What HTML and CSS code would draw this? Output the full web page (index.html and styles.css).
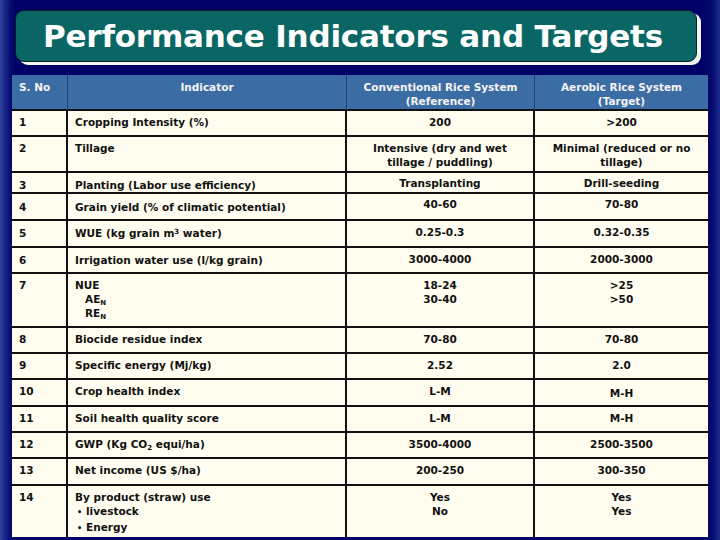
FILE: index.html
```html
<!DOCTYPE html>
<html>
<head>
<meta charset="utf-8">
<link rel="stylesheet" href="styles.css">
</head>
<body>
<div class="slide">
  <div class="title-box"><h1 class="title">Performance Indicators and Targets</h1></div>
  <table class="grid">
    <colgroup>
      <col class="c1"><col class="c2"><col class="c3"><col class="c4">
    </colgroup>
    <thead>
      <tr class="h36">
        <th class="sno">S. No</th>
        <th>Indicator</th>
        <th>Conventional Rice System<br>(Reference)</th>
        <th class="last">Aerobic Rice System<br>(Target)</th>
      </tr>
    </thead>
    <tbody>
      <tr class="h26"><td>1</td><td class="ind">Cropping Intensity (%)</td><td class="v">200</td><td class="v last">&gt;200</td></tr>
      <tr class="h36"><td>2</td><td class="ind">Tillage</td><td class="v">Intensive (dry and wet<br>tillage / puddling)</td><td class="v last">Minimal (reduced or no<br>tillage)</td></tr>
      <tr class="h21"><td class="p5">3</td><td class="ind p5">Planting (Labor use efficiency)</td><td class="v p3">Transplanting</td><td class="v last p3">Drill-seeding</td></tr>
      <tr class="h27"><td class="p6">4</td><td class="ind p6">Grain yield (% of climatic potential)</td><td class="v p3">40-60</td><td class="v last p3">70-80</td></tr>
      <tr class="h27"><td class="p5">5</td><td class="ind p5">WUE (kg grain m<sup>3</sup> water)</td><td class="v p4">0.25-0.3</td><td class="v last p4">0.32-0.35</td></tr>
      <tr class="h26"><td class="p5">6</td><td class="ind p5">Irrigation water use (l/kg grain)</td><td class="v">3000-4000</td><td class="v last">2000-3000</td></tr>
      <tr class="h54"><td>7</td><td class="ind">NUE<br><span class="indent">AE<sub>N</sub></span><br><span class="indent">RE<sub>N</sub></span></td><td class="v">18-24<br>30-40</td><td class="v last">&gt;25<br>&gt;50</td></tr>
      <tr class="h26"><td>8</td><td class="ind">Biocide residue index</td><td class="v">70-80</td><td class="v last">70-80</td></tr>
      <tr class="h26"><td>9</td><td class="ind">Specific energy (Mj/kg)</td><td class="v">2.52</td><td class="v last">2.0</td></tr>
      <tr class="h27"><td>10</td><td class="ind">Crop health index</td><td class="v">L-M</td><td class="v last p6">M-H</td></tr>
      <tr class="h26"><td>11</td><td class="ind">Soil health quality score</td><td class="v">L-M</td><td class="v last">M-H</td></tr>
      <tr class="h26"><td>12</td><td class="ind">GWP (Kg CO<sub>2</sub> equi/ha)</td><td class="v">3500-4000</td><td class="v last">2500-3500</td></tr>
      <tr class="h27"><td>13</td><td class="ind">Net income (US $/ha)</td><td class="v">200-250</td><td class="v last">300-350</td></tr>
      <tr class="h51 lastrow"><td>14</td><td class="ind">By product (straw) use<ul class="bullets"><li>livestock</li><li>Energy</li></ul></td><td class="v">Yes<br>No</td><td class="v last">Yes<br>Yes</td></tr>
    </tbody>
  </table>
</div>
</body>
</html>
```

FILE: styles.css
```css
html, body {
  margin: 0;
  padding: 0;
}
body {
  width: 720px;
  height: 540px;
  overflow: hidden;
  background: linear-gradient(to right, #34449e 0px, #1a2688 5px, #050a70 11px, #000066 16px, #000066 700px, #040a6c 712px, #1a2a8c 720px);
  font-family: "DejaVu Sans", Verdana, sans-serif;
}
.slide {
  padding-top: 10px;
}
.title-box {
  margin-left: 15px;
  width: 680px;
  height: 50px;
  background: #0a6664;
  border: 1px solid #022;
  border-radius: 9px;
  box-shadow: 4px 3px 0 #f4f4f4;
  display: flex;
  align-items: center;
  justify-content: center;
}
.title {
  margin: 0;
  padding-right: 6px;
  color: #fff;
  font-size: 31px;
  font-weight: bold;
  letter-spacing: -0.2px;
  line-height: 1;
}
.grid {
  margin-top: 13px;
  margin-left: 12px;
  width: 696px;
  table-layout: fixed;
  border-collapse: separate;
  border-spacing: 0;
  font-size: 10.5px;
  font-weight: bold;
  line-height: 14px;
}
.c1 { width: 56px; }
.c2 { width: 279px; }
.c3 { width: 188px; }
.c4 { width: 173px; }
.grid th {
  background: #3c6ca4;
  color: #f4f4f4;
  font-weight: bold;
  text-align: center;
  vertical-align: top;
  padding: 5px 0 0 0;
  border-right: 1px solid #23426e;
  border-bottom: 2px solid #111;
}
.grid th.sno {
  text-align: left;
  padding-left: 7px;
}
.grid th.last {
  border-right: none;
}
.grid td {
  background: #fffdef;
  color: #111;
  vertical-align: top;
  padding: 4px 0 0 7px;
  border-right: 2px solid #111;
  border-bottom: 2px solid #111;
}
.grid td.ind {
  padding-left: 7px;
}
.grid td.v {
  text-align: center;
  padding-left: 0;
}
.grid td.last {
  border-right: none;
}
.grid tr.lastrow td {
  border-bottom: none;
}
.grid td.p3 { padding-top: 3px; }
.grid td.p4 { padding-top: 4px; }
.grid td.p5 { padding-top: 5px; }
.grid td.p6 { padding-top: 6px; }
.h21 { height: 21px; }
.h26 { height: 26px; }
.h27 { height: 27px; }
.h36 { height: 36px; }
.h51 { height: 51px; }
.h54 { height: 54px; }
.indent {
  padding-left: 10px;
}
sub, sup {
  font-size: 7px;
  line-height: 0;
}
sup { vertical-align: 3px; }
sub { vertical-align: -2px; }
.bullets {
  list-style: none;
  margin: 0;
  padding: 0;
}
.bullets li::before {
  content: "•";
  display: inline-block;
  width: 9px;
  padding-left: 2px;
  font-size: 8px;
}
```
